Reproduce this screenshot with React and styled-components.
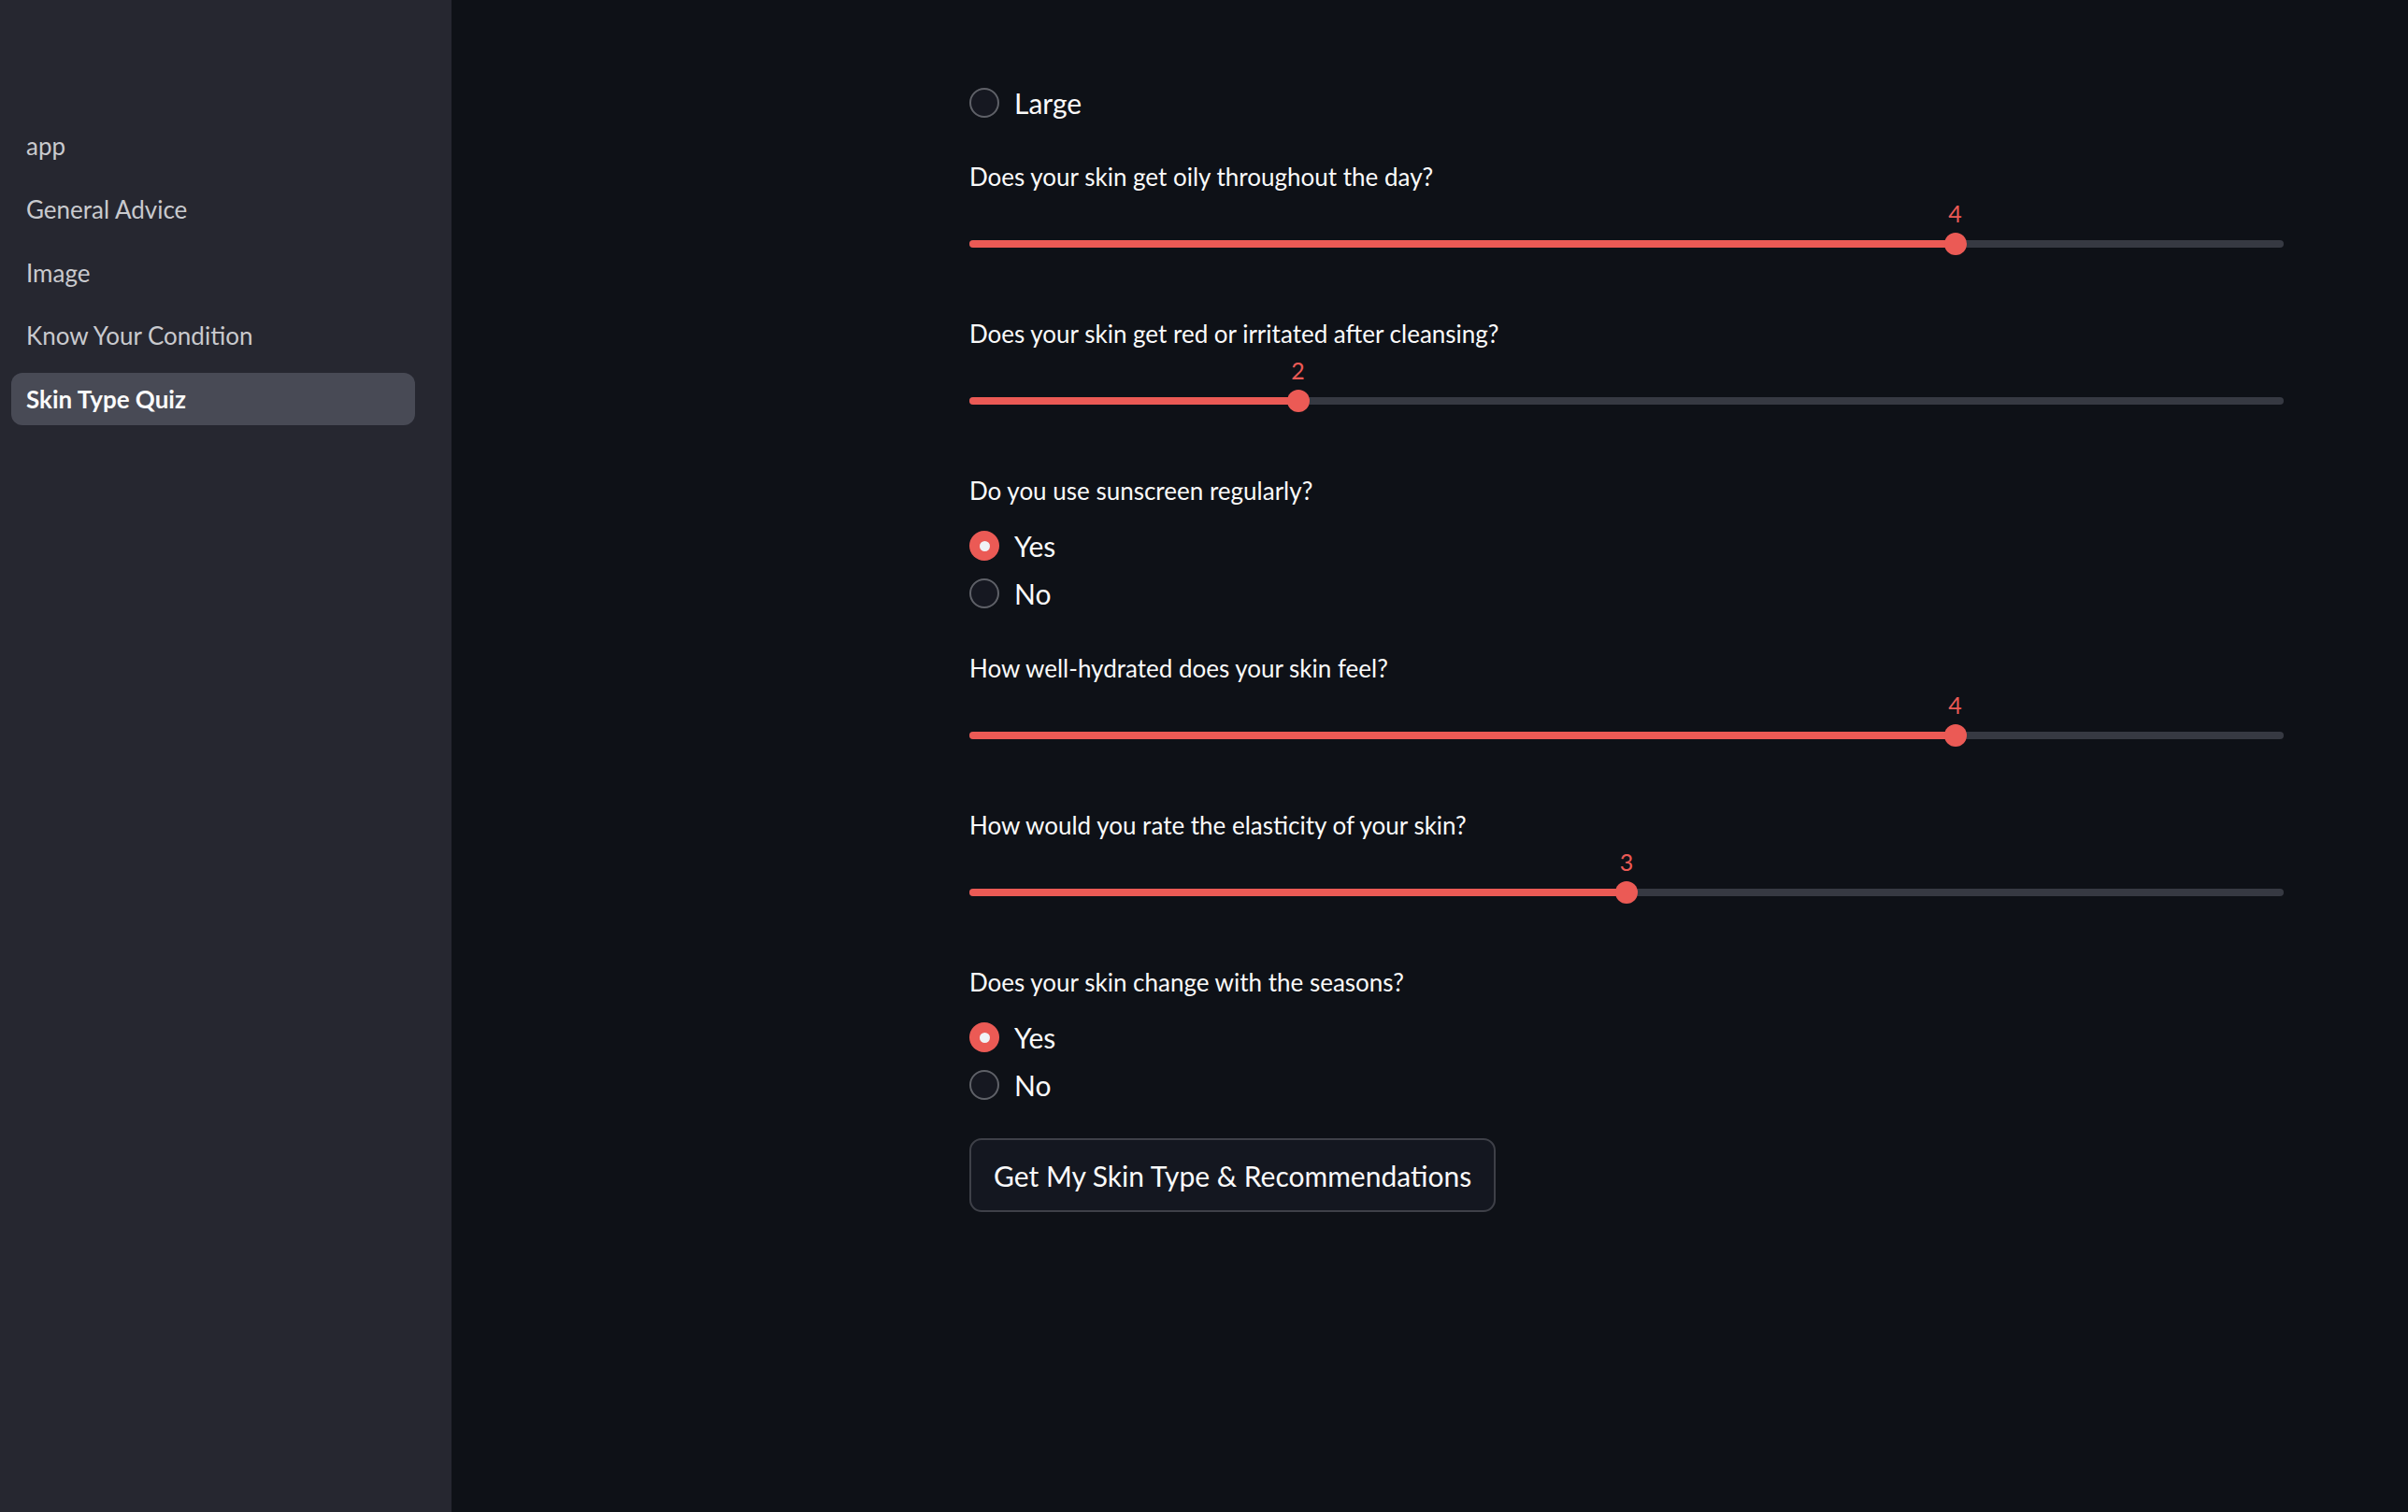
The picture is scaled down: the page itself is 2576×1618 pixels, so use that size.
import React from "react";
import styled, { createGlobalStyle } from "styled-components";

const Global = createGlobalStyle`
  html, body { margin: 0; padding: 0; background: #0e1117; }
  body { font-family: "Lato", "Noto Sans", sans-serif; color: #fafafa; }
  * { box-sizing: border-box; }
`;

const Page = styled.div`
  display: flex;
  min-height: 1618px;
  width: 100%;
`;

const Sidebar = styled.nav`
  width: 483px;
  flex: 0 0 483px;
  background: #262730;
  padding: 128px 39px 0 12px;
  display: flex;
  flex-direction: column;
  gap: 11.75px;
`;

const NavLink = styled.div`
  height: 56px;
  display: flex;
  align-items: center;
  padding-left: 16px;
  border-radius: 12px;
  font-size: 26px;
  color: ${(p) => (p.$active ? "#fafafa" : "#c9cace")};
  font-weight: ${(p) => (p.$active ? 700 : 400)};
  background: ${(p) => (p.$active ? "#484a55" : "transparent")};
`;

const Main = styled.main`
  flex: 1;
  padding: 84.5px 133px 0 554px;
  display: flex;
  flex-direction: column;
`;

const Field = styled.div`
  display: flex;
  flex-direction: column;
  margin-bottom: ${(p) => p.$after}px;
`;

const Label = styled.div`
  height: 33px;
  line-height: 33px;
  font-size: 26px;
  color: #fafafa;
  white-space: nowrap;
`;

const RadioGroup = styled.div`
  display: flex;
  flex-direction: column;
  margin-top: ${(p) => p.$top || 0}px;
`;

const RadioRow = styled.div`
  height: 51px;
  display: flex;
  align-items: center;
  gap: 16px;
  font-size: 30px;
  color: #fafafa;
`;

const RadioCircle = styled.span`
  width: 32px;
  height: 32px;
  flex: 0 0 32px;
  border-radius: 50%;
  display: flex;
  align-items: center;
  justify-content: center;
  background: ${(p) => (p.$checked ? "#eb5a55" : "#161821")};
  border: ${(p) => (p.$checked ? "none" : "2px solid #5f6168")};
  &::after {
    content: "";
    display: ${(p) => (p.$checked ? "block" : "none")};
    width: 11px;
    height: 11px;
    border-radius: 50%;
    background: #f0f2f6;
  }
`;

const SliderBody = styled.div`
  margin-top: 5px;
  display: flex;
  flex-direction: column;
`;

const ValueRow = styled.div`
  position: relative;
  height: 34px;
`;

const ValueText = styled.span`
  position: absolute;
  top: 0;
  transform: translateX(-50%);
  line-height: 34px;
  font-size: 25px;
  color: #eb5a55;
`;

const Track = styled.div`
  position: relative;
  margin-top: 12.5px;
  height: 8px;
  border-radius: 4px;
  background: #363942;
`;

const Fill = styled.div`
  position: absolute;
  left: 0;
  top: 0;
  bottom: 0;
  border-radius: 4px;
  background: #eb5a55;
`;

const Thumb = styled.div`
  position: absolute;
  top: 50%;
  width: 24px;
  height: 24px;
  border-radius: 50%;
  background: #eb5a55;
  transform: translate(-50%, -50%);
`;

const Button = styled.button`
  align-self: flex-start;
  height: 79px;
  padding: 0 24px;
  border-radius: 13px;
  border: 2px solid #3e4048;
  background: #141720;
  color: #fafafa;
  font-family: inherit;
  font-size: 30px;
  cursor: pointer;
`;

function Slider({ label, value, min = 1, max = 5 }) {
  const pct = ((value - min) / (max - min)) * 100;
  return (
    <Field $after={75.5}>
      <Label>{label}</Label>
      <SliderBody>
        <ValueRow>
          <ValueText style={{ left: `${pct}%` }}>{value}</ValueText>
        </ValueRow>
        <Track>
          <Fill style={{ width: `${pct}%` }} />
          <Thumb style={{ left: `${pct}%` }} />
        </Track>
      </SliderBody>
    </Field>
  );
}

function Radio({ options, selected }) {
  return options.map((o) => (
    <RadioRow key={o}>
      <RadioCircle $checked={o === selected} />
      <span>{o}</span>
    </RadioRow>
  ));
}

function RadioField({ label, options, selected, after }) {
  return (
    <Field $after={after}>
      <Label>{label}</Label>
      <RadioGroup $top={17}>
        <Radio options={options} selected={selected} />
      </RadioGroup>
    </Field>
  );
}

export default function App() {
  const nav = ["app", "General Advice", "Image", "Know Your Condition", "Skin Type Quiz"];
  return (
    <>
      <Global />
      <Page>
        <Sidebar>
          {nav.map((n) => (
            <NavLink key={n} $active={n === "Skin Type Quiz"}>
              {n}
            </NavLink>
          ))}
        </Sidebar>
        <Main>
          <Field $after={37}>
            <RadioGroup>
              <Radio options={["Large"]} selected={null} />
            </RadioGroup>
          </Field>
          <Slider label="Does your skin get oily throughout the day?" value={4} />
          <Slider label="Does your skin get red or irritated after cleansing?" value={2} />
          <RadioField
            label="Do you use sunscreen regularly?"
            options={["Yes", "No"]}
            selected="Yes"
            after={38}
          />
          <Slider label="How well-hydrated does your skin feel?" value={4} />
          <Slider label="How would you rate the elasticity of your skin?" value={3} />
          <RadioField
            label="Does your skin change with the seasons?"
            options={["Yes", "No"]}
            selected="Yes"
            after={31.5}
          />
          <Button>Get My Skin Type &amp; Recommendations</Button>
        </Main>
      </Page>
    </>
  );
}
